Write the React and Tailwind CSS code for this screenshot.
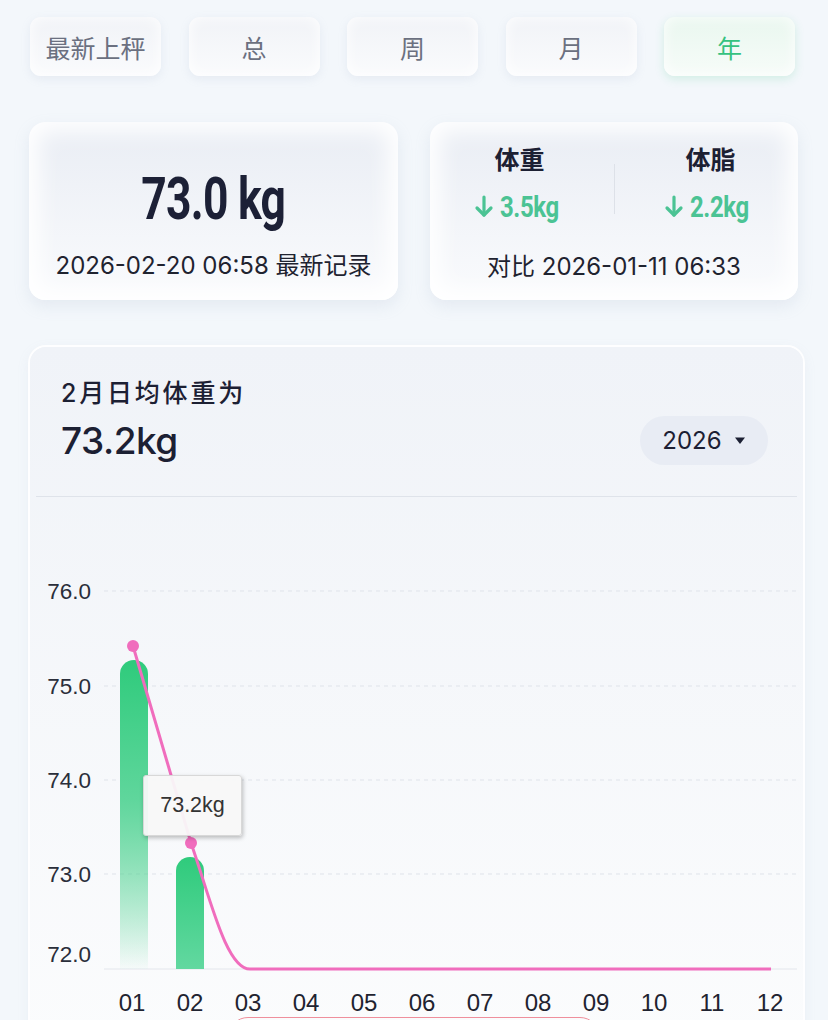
import { useState } from 'react'

const tabs = ['最新上秤', '总', '周', '月', '年']
const months = ['01', '02', '03', '04', '05', '06', '07', '08', '09', '10', '11', '12']
const ticks = [
    { label: '76.0', y: 94 },
    { label: '75.0', y: 189 },
    { label: '74.0', y: 283 },
    { label: '73.0', y: 377 },
]

function DownArrow() {
    return (
        <svg width="20" height="24" viewBox="0 0 20 24" fill="none" stroke="currentColor" strokeWidth="3.2" strokeLinecap="round" strokeLinejoin="round">
            <path d="M10 3v18" />
            <path d="M3 14l7 7 7-7" />
        </svg>
    )
}

function Chart() {
    return (
        <div className="relative">
            <svg width="773" height="528" viewBox="0 0 773 528" className="block">
                <defs>
                    <linearGradient id="bar1" x1="0" y1="0" x2="0" y2="1">
                        <stop offset="0" stopColor="#2fcb7c" />
                        <stop offset="0.45" stopColor="#5fd69c" />
                        <stop offset="1" stopColor="#2fcb7c" stopOpacity="0.02" />
                    </linearGradient>
                    <linearGradient id="bar2" x1="0" y1="0" x2="0" y2="1">
                        <stop offset="0" stopColor="#2fcb7c" />
                        <stop offset="1" stopColor="#62d8a0" />
                    </linearGradient>
                </defs>

                {/* grid */}
                {ticks.map(t => (
                    <g key={t.label}>
                        <line x1="74" x2="767" y1={t.y} y2={t.y} stroke="#dfe3ea" strokeDasharray="4 4" />
                        <text x="61" y={t.y + 8} textAnchor="end" fontSize="22.5" fill="#2a2e3a" fontFamily="'Liberation Sans', Arial, sans-serif">{t.label}</text>
                    </g>
                ))}
                <line x1="74" x2="767" y1="472" y2="472" stroke="#e3e6ec" />
                <text x="61" y="465" textAnchor="end" fontSize="22.5" fill="#2a2e3a" fontFamily="'Liberation Sans', Arial, sans-serif">72.0</text>

                {/* bars */}
                <path d="M90 472 V177 a14 14 0 0 1 28 0 V472 Z" fill="url(#bar1)" />
                <path d="M146 472 V374 a14 14 0 0 1 28 0 V472 Z" fill="url(#bar2)" />

                {/* line */}
                <path d="M103 149 L161 346 C180 400 196 472 220 472 L741 472" fill="none" stroke="#f06dbd" strokeWidth="3" />
                <circle cx="103" cy="149" r="6" fill="#f06dbd" />
                <circle cx="161" cy="346" r="6" fill="#f06dbd" />

                {/* x labels */}
                {months.map((m, i) => (
                    <text key={m} x={102 + 58 * i} y="514" textAnchor="middle" fontSize="24" fill="#1f2330" fontFamily="'Liberation Sans', Arial, sans-serif">{m}</text>
                ))}
            </svg>

            {/* tooltip */}
            <div className="absolute left-[113px] top-[278px] w-[99px] h-[61px] flex items-center justify-center bg-[#f8f8f8]/95 border border-[#d8d8d8] rounded-[3px] shadow-[1px_2px_4px_rgba(0,0,0,0.25)] text-[21.5px] text-[#333] font-['Liberation_Sans',Arial,sans-serif]">
                73.2kg
            </div>

            {/* legend pill peeking at bottom */}
            <div className="absolute left-[198px] top-[520px] w-[372px] h-[40px] rounded-full border border-[#ef8f9c]" />
        </div>
    )
}

export default function App() {
    const [active, setActive] = useState('年')

    return (
        <div className="w-[828px] h-[1020px] overflow-hidden bg-[#f3f7fb] font-['Inter','Noto_Sans_CJK_SC',sans-serif] text-[#1c2033]">

            {/* Tabs */}
            <div className="flex gap-[27.5px] pl-[30px] pt-[17px]">
                {tabs.map(tab => (
                    <div
                        key={tab}
                        onClick={() => setActive(tab)}
                        className={`
                            w-[131px] h-[59px] flex items-center justify-center pt-[7px] rounded-[11px] text-[25px] cursor-pointer
                            ${active === tab
                                ? 'bg-gradient-to-b from-[#e9f7ef] to-[#f7fcf9] text-[#35c27f] shadow-[0_3px_10px_rgba(60,200,130,0.18),inset_0_0_14px_rgba(255,255,255,0.9)]'
                                : 'bg-gradient-to-b from-[#f1f3f7] to-[#fafbfd] text-[#6b7080] shadow-[0_3px_10px_rgba(150,165,190,0.14),inset_0_0_14px_rgba(255,255,255,0.95)]'}
                        `}
                    >
                        {tab}
                    </div>
                ))}
            </div>

            {/* Summary cards */}
            <div className="flex gap-[32px] pl-[29px] mt-[46px]">
                <div className="w-[369px] h-[178px] rounded-[16px] bg-gradient-to-b from-[#e9edf4] to-[#fafbfd] shadow-[0_6px_16px_rgba(150,165,190,0.16),inset_0_0_22px_10px_rgba(255,255,255,0.97)] flex flex-col items-center">
                    <div className="mt-[45px] h-[64px] flex items-center font-['Roboto',sans-serif] font-bold text-[60px] tracking-[-1px] scale-x-[0.74] text-[#1c2036]">
                        73.0<span className="ml-[14px]">kg</span>
                    </div>
                    <div className="mt-[17px] text-[24px] text-[#1f2330]">2026-02-20 06:58 最新记录</div>
                </div>

                <div className="w-[368px] h-[178px] rounded-[16px] bg-gradient-to-b from-[#e9edf4] to-[#fafbfd] shadow-[0_6px_16px_rgba(150,165,190,0.16),inset_0_0_22px_10px_rgba(255,255,255,0.97)] flex flex-col items-center">
                    <div className="flex items-center mt-[20px]">
                        <div className="w-[184px] flex flex-col items-center">
                            <div className="text-[25px] font-semibold ml-[-4px]">体重</div>
                            <div className="flex items-center text-[#4bc394] mt-[4px] ml-[4px]">
                                <DownArrow />
                                <span className="font-['Roboto',sans-serif] font-bold text-[30px] scale-x-[0.8] origin-left ml-[6px] tracking-[-0.5px]">3.5kg</span>
                            </div>
                        </div>
                        <div className="w-px h-[50px] bg-[#dde1e8] mt-[8px]" />
                        <div className="w-[184px] flex flex-col items-center">
                            <div className="text-[25px] font-semibold ml-[8px]">体脂</div>
                            <div className="flex items-center text-[#4bc394] mt-[4px] ml-[14px]">
                                <DownArrow />
                                <span className="font-['Roboto',sans-serif] font-bold text-[30px] scale-x-[0.8] origin-left ml-[6px] tracking-[-0.5px]">2.2kg</span>
                            </div>
                        </div>
                    </div>
                    <div className="mt-[20px] text-[24px] text-[#1f2330]">对比 2026-01-11 06:33</div>
                </div>
            </div>

            {/* Chart card */}
            <div className="ml-[30px] mt-[47px] w-[773px] h-[700px] rounded-[16px] bg-gradient-to-b from-[#f0f3f8] to-[#fbfcfd] shadow-[0_0_0_2px_rgba(255,255,255,0.9),0_4px_14px_rgba(150,165,190,0.12)]">
                <div className="flex justify-between pl-[31px] pr-[35px] pt-[28px] h-[149px]">
                    <div className="flex flex-col">
                        <div className="text-[25px] font-medium tracking-[2.8px] leading-[36px]">2月日均体重为</div>
                        <div className="text-[37px] font-medium mt-[8px] tracking-[-0.5px] leading-[44px]">73.2kg</div>
                    </div>
                    <div className="mt-[41px] w-[128px] h-[49px] rounded-full bg-[#e8ecf4] flex items-center justify-center gap-[12px] text-[24px]">
                        2026
                        <svg width="12" height="9" viewBox="0 0 12 9"><path d="M1 1.5h10L6 8z" fill="#1c2033" strokeLinejoin="round" /></svg>
                    </div>
                </div>
                <div className="mx-[6px] h-px bg-[#dfe3ea]" />
                <Chart />
            </div>

        </div>
    )
}
